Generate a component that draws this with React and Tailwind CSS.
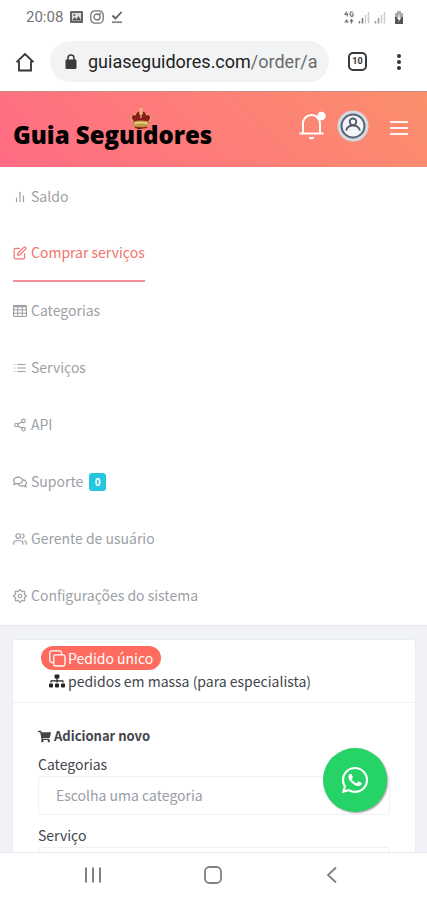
import { FiBarChart2, FiEdit, FiList, FiShare2, FiUsers, FiSettings } from "react-icons/fi";
import { FaRegComments, FaSitemap, FaShoppingCart, FaWhatsapp } from "react-icons/fa";

const TableIcon = ({ size }) => (
  <svg width={size} height={size} viewBox="0 0 14 14" fill="none" stroke="currentColor">
    <rect x="0.6" y="1.5" width="12.8" height="11" rx="1" strokeWidth="1.2" />
    <path d="M0.6 2.5h12.8" strokeWidth="1.6" />
    <path d="M0.6 5.8h12.8M0.6 9.2h12.8M4.7 2v10.5M9.3 2v10.5" />
  </svg>
);

const menu = [
  { label: "Saldo", icon: FiBarChart2 },
  { label: "Comprar serviços", icon: FiEdit, active: true },
  { label: "Categorias", icon: TableIcon },
  { label: "Serviços", icon: FiList },
  { label: "API", icon: FiShare2 },
  { label: "Suporte", icon: FaRegComments, count: 0 },
  { label: "Gerente de usuário", icon: FiUsers },
  { label: "Configurações do sistema", icon: FiSettings },
];

const StatusBar = () => (
  <div className="flex h-8 shrink-0 items-center justify-between pl-[26px] pr-[23px] pt-0.5 text-[#757575]">
    <div className="flex items-center gap-[7px]">
      <span className="font-['Roboto',sans-serif] text-[15px] leading-5">20:08</span>
      <svg width="13" height="12" viewBox="0 0 13 12">
        <rect width="13" height="12" rx="1" fill="#666" />
        <path d="M2 2h9v8H2z" fill="#ddd" />
        <path d="M2 9.5l2.5-3.3 2 2 2-3.2 2.7 4.5z" fill="#555" />
        <circle cx="4.3" cy="4" r="1" fill="#555" />
      </svg>
      <svg width="14" height="14" viewBox="0 0 14 14" fill="none" stroke="currentColor" strokeWidth="1.3">
        <rect x="0.8" y="0.8" width="12.4" height="12.4" rx="4" />
        <circle cx="7" cy="7" r="3" />
        <circle cx="10.4" cy="3.6" r="0.4" />
      </svg>
      <svg width="12" height="14" viewBox="0 0 12 14" fill="none" stroke="#5c5c5c" strokeWidth="1.8">
        <path d="M1.5 5.5l3 3L10.5 2" />
        <path d="M1 12.2h10" stroke="#888" />
      </svg>
    </div>
    <div className="flex items-center gap-1">
      <svg width="10" height="13" viewBox="0 0 10 13" fill="none" stroke="currentColor" strokeWidth="1.2">
        <path d="M2.8 0.5L1 3.5h3M3.3 2v3.4M9 1.2C7 0 6 1.5 6 3s1.5 3 3 2V3H7.5" />
        <path d="M2.5 8l2.2 3.5H.3zM7.5 7.5l2.2 3H8.2v2H6.8v-2H5.3z" fill="currentColor" stroke="none" />
      </svg>
      <svg width="12" height="13" viewBox="0 0 12 13" strokeWidth="1.5">
        <path d="M1.5 12.5V10M4.5 12.5V7" stroke="#777" />
        <path d="M7.5 12.5V4M10.5 12.5V1" stroke="#ccc" />
      </svg>
      <svg width="12" height="13" viewBox="0 0 12 13" strokeWidth="1.5">
        <path d="M1.5 12.5V10M4.5 12.5V7" stroke="#999" />
        <path d="M7.5 12.5V4M10.5 12.5V1" stroke="#ccc" />
      </svg>
      <svg className="ml-1" width="10" height="13" viewBox="0 0 10 13">
        <path d="M3 0h4v2h2v11H1V2h2z" fill="#aaa" />
        <path d="M1 6h8v7H1z" fill="#555" />
        <path d="M5.5 3L3 8h1.8L4.5 11 7.3 6.5H5.5z" fill="#fff" />
      </svg>
    </div>
  </div>
);

const BrowserBar = () => (
  <div className="flex h-[59px] shrink-0 items-center pl-[15px] pr-[21px]">
    <button aria-label="Início" className="text-[#333]">
      <svg width="20" height="20" viewBox="0 0 20 20" fill="none" stroke="currentColor" strokeWidth="1.8">
        <path d="M1.5 10.2L10 2l8.5 8.2M4 9v9.5h12V9" />
      </svg>
    </button>
    <div className="ml-[15px] flex h-[41px] min-w-0 flex-1 items-center rounded-full bg-[#f1f3f4] pl-[15px] pr-2">
      <svg className="shrink-0" width="12" height="16" viewBox="0 0 12 16">
        <rect x="0.5" y="5.5" width="11" height="9.5" rx="1.2" fill="#3a3a3a" />
        <path d="M3 6V4a3 3 0 0 1 6 0v2" fill="none" stroke="#3a3a3a" strokeWidth="1.5" />
      </svg>
      <p className="ml-[11px] overflow-hidden whitespace-nowrap font-['Roboto',sans-serif] text-[18px] leading-7 text-[#222]">
        guiaseguidores.com<span className="text-[#6b6b6b]">/order/a</span>
      </p>
    </div>
    <button
      aria-label="Abas"
      className="ml-[19px] flex h-[19px] w-[19px] shrink-0 items-center justify-center rounded-[5px] border-2 border-[#3a3a3a] font-['Roboto',sans-serif] text-[9px] font-bold text-[#333]"
    >
      10
    </button>
    <button aria-label="Mais" className="ml-6 flex w-[15px] flex-col items-center gap-0.5">
      <span className="h-1 w-1 rounded-full bg-[#333]" />
      <span className="h-1 w-1 rounded-full bg-[#333]" />
      <span className="h-1 w-1 rounded-full bg-[#333]" />
    </button>
  </div>
);

const Crown = () => (
  <svg className="absolute -top-[11px] left-[116px]" width="24" height="22" viewBox="0 0 24 22">
    <path d="M3 12C0 8 3 5 7 6.5c1-3 3.5-3.5 5-2 1.5-1.5 4-1 5 2C21 5 24 8 21 12l-2 4H5z" fill="#8a1d1a" />
    <path
      d="M4.5 14C-.5 8 4 5.5 7 7M19.5 14C24.500 8 20 5.5 17 7M12 5v5"
      fill="none"
      stroke="#dcae74"
      strokeWidth="1.3"
    />
    <path d="M4.5 13.5q7.500-2 15 0l-.7 5q-6.800 1.800-13.600 0z" fill="#c39a4a" />
    <path d="M5.5 15.5q6.500-1.600 13 0" fill="none" stroke="#f3dc92" strokeWidth="1.3" />
    <path d="M5.8 18.5q6.200 1.600 12.400 0v1.500q-6.200 1.500-12.400 0z" fill="#8f2a1c" />
    <circle cx="12" cy="5" r="1.9" fill="#e5bd78" />
    <path d="M12 0v4M10.5 1.5h3" stroke="#e8c68a" strokeWidth="1.3" />
  </svg>
);

const Header = () => (
  <header className="flex h-[76px] shrink-0 items-center justify-between border-t border-[#c98a86] bg-linear-45 from-[#ff6b84] to-[#fb8f6b] pl-[13px] pr-[19px]">
    <div className="relative mt-2.5">
      <h1 className="font-['Open_Sans',sans-serif] text-2xl font-extrabold leading-8 text-black">Guia Seguidores</h1>
      <Crown />
    </div>
    <div className="mb-2 flex items-center text-white">
      <button aria-label="Notificações">
        <svg width="28" height="30" viewBox="0 0 28 30" fill="none" stroke="currentColor" strokeWidth="2">
          <path d="M1.5 22.5h24M5 22V12.5a8.5 8.5 0 0 1 17 0V22" />
          <path d="M10.5 26h6q-1 2.5-3 2.5t-3-2.5z" fill="currentColor" stroke="none" />
          <circle cx="23.5" cy="5" r="4.2" fill="currentColor" stroke="none" />
        </svg>
      </button>
      <button aria-label="Perfil" className="ml-[11px]">
        <svg width="32" height="32" viewBox="0 0 32 32" fill="none">
          <circle cx="16" cy="16" r="15.5" fill="#d3dae2" />
          <circle cx="16" cy="16" r="11.5" fill="#f3f4f8" stroke="#5b6778" strokeWidth="2" />
          <circle cx="16" cy="11.8" r="3.3" stroke="#4f5a6c" strokeWidth="1.8" />
          <path d="M9 20.5q1.5-5 7-5t7 5" stroke="#4f5a6c" strokeWidth="1.8" />
        </svg>
      </button>
      <button aria-label="Menu" className="ml-[21px] flex w-[18px] flex-col gap-1 pt-1">
        <span className="h-0.5 bg-white/90" />
        <span className="h-0.5 bg-white/90" />
        <span className="h-0.5 bg-white/90" />
      </button>
    </div>
  </header>
);

const Menu = () => (
  <nav className="flex shrink-0 flex-col items-start border-b border-[#e2e6ec] bg-white px-[13px] pb-px pt-px text-[14px]">
    {menu.map(({ label, icon: Icon, active, count }) => (
      <a
        key={label}
        href="#"
        className={
          active
            ? "flex h-[57px] items-center gap-1 border-b-2 border-[#f0919a] text-[#f0746c]"
            : "flex h-[57px] items-center gap-1 text-[#9c9fa6]"
        }
      >
        <Icon size={14} />
        <span>{label}</span>
        {count !== undefined && (
          <span className="ml-0.5 flex h-[18px] w-[17px] items-center justify-center rounded-[3px] bg-[#26c6de] text-[10px] font-bold text-white">
            {count}
          </span>
        )}
      </a>
    ))}
  </nav>
);

const CopyIcon = () => (
  <svg width="17" height="17" viewBox="0 0 17 17" fill="none" stroke="currentColor" strokeWidth="1.3">
    <rect x="4.8" y="4.8" width="11.2" height="11.2" rx="1.8" />
    <path d="M4.8 12.5H2.8a2 2 0 0 1-2-2V2.8a2 2 0 0 1 2-2h7.700a2 2 0 0 1 2 2v2" />
  </svg>
);

const OrderCard = () => (
  <section className="ml-3 mr-[11px] mt-[13px] rounded-t-[3px] border border-[#e9ecf2] bg-white text-[14px] text-[#42464c]">
    <div className="flex h-[63px] flex-col items-start border-b border-[#f0f1f4] pl-7 pt-1.5">
      <button className="flex h-6 items-center gap-0.5 rounded-full bg-[#ff6b5e] px-2 text-white">
        <CopyIcon />
        <span>Pedido único</span>
      </button>
      <button className="flex h-[22px] items-center gap-[3px] px-2">
        <FaSitemap size={16} className="text-[#222]" />
        <span>pedidos em massa (para especialista)</span>
      </button>
    </div>
    <form className="flex flex-col px-[25px] pt-[22px]">
      <h2 className="flex h-[22px] items-center gap-[3px] text-[13px] font-bold">
        <FaShoppingCart size={13} />
        Adicionar novo
      </h2>
      <label htmlFor="categoria" className="mt-[7px] leading-5">Categorias</label>
      <select
        id="categoria"
        className="mt-0.5 h-[39px] w-full appearance-none rounded-[3px] border border-[#f0f1f4] bg-white pl-[17px] text-[#999da6]"
      >
        <option>Escolha uma categoria</option>
      </select>
      <label htmlFor="servico" className="mt-2.5 leading-5">Serviço</label>
      <select
        id="servico"
        className="mt-0.5 h-[39px] w-full appearance-none rounded-[3px] border border-[#f0f1f4] bg-white pl-[17px] text-[#999da6]"
      />
    </form>
  </section>
);

const SystemNav = () => (
  <div className="flex h-12 shrink-0 items-center justify-between border-t border-[#e8e8ec] bg-white pb-[3px] pl-[84px] pr-[86px] text-[#808080]">
    <button aria-label="Recentes">
      <svg width="18" height="18" viewBox="0 0 18 18" stroke="currentColor" strokeWidth="2">
        <path d="M2 1.5v15M9 1.5v15M16 1.5v15" />
      </svg>
    </button>
    <button aria-label="Tela inicial">
      <svg width="18" height="18" viewBox="0 0 18 18" fill="none" stroke="currentColor" strokeWidth="1.8">
        <rect x="1" y="1" width="16" height="16" rx="4.5" />
      </svg>
    </button>
    <button aria-label="Voltar">
      <svg width="18" height="18" viewBox="0 0 18 18" fill="none" stroke="currentColor" strokeWidth="1.8">
        <path d="M13 1.5L5 9l8 7.5" />
      </svg>
    </button>
  </div>
);

export default function App() {
  return (
    <div className="flex h-screen flex-col bg-white font-['Noto_Sans_CJK_SC',sans-serif]">
      <StatusBar />
      <BrowserBar />
      <main className="relative flex min-h-0 flex-1 flex-col overflow-hidden bg-[#f0f2f7]">
        <Header />
        <Menu />
        <OrderCard />
        <a
          href="#"
          aria-label="WhatsApp"
          className="absolute bottom-10 right-10 flex h-16 w-16 items-center justify-center rounded-full bg-[#25d366] text-white shadow-[1px_1px_2px_#999]"
        >
          <FaWhatsapp size={30} />
        </a>
      </main>
      <SystemNav />
    </div>
  );
}
